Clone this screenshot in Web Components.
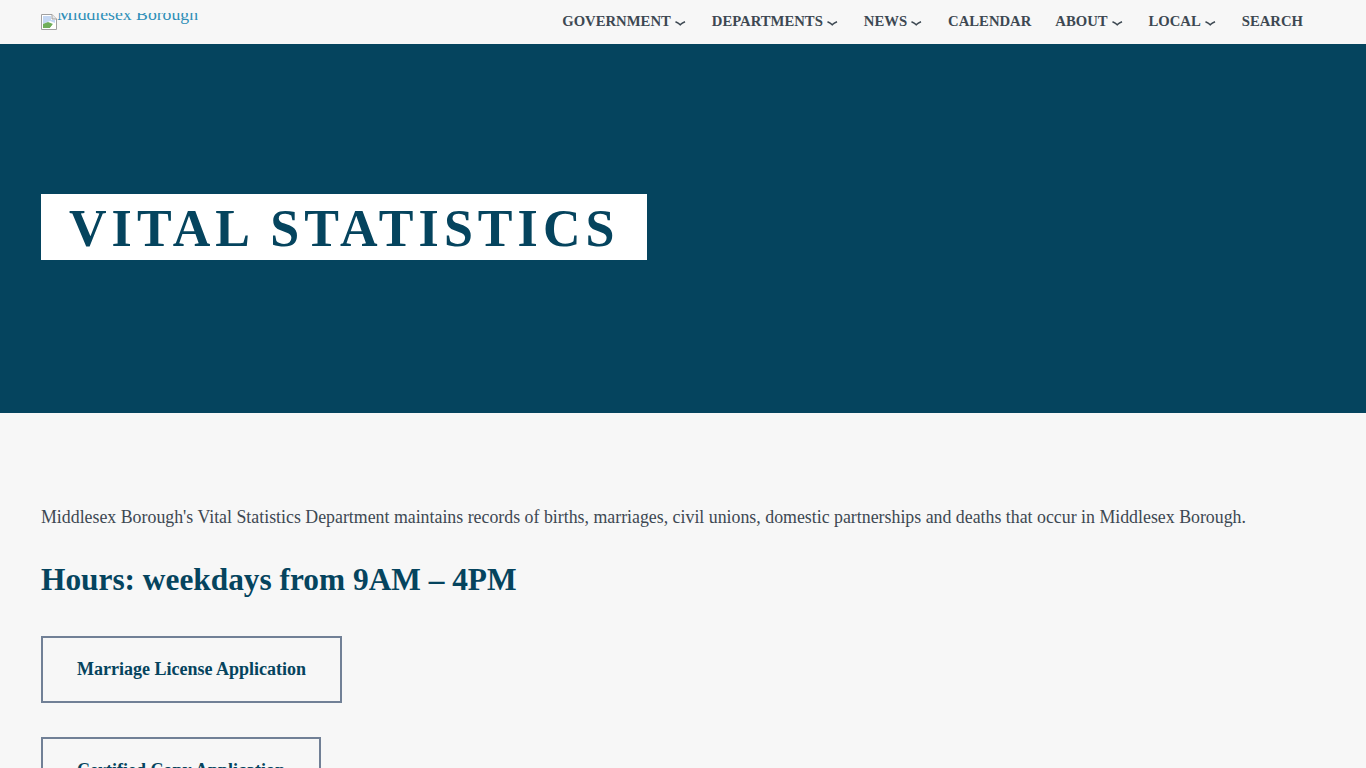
<!DOCTYPE html>
<html lang="en">
<head>
<meta charset="utf-8">
<title>Vital Statistics</title>
<style>
  html, body { margin: 0; padding: 0; background: #f7f7f7; }
  body { font-family: "Liberation Serif", "Times New Roman", serif; }
</style>
</head>
<body>
<site-header></site-header>
<page-hero>Vital Statistics</page-hero>
<page-content>
  <p>Middlesex Borough's Vital Statistics Department maintains records of births, marriages, civil unions, domestic partnerships and deaths that occur in Middlesex Borough.</p>
  <h2>Hours: weekdays from 9AM – 4PM</h2>
  <outline-button>Marriage License Application</outline-button>
  <outline-button>Certified Copy Application</outline-button>
</page-content>

<script>
class NavItem extends HTMLElement {
  constructor () {
    super()
    this.shadow = this.attachShadow({ mode: 'open' })
  }

  connectedCallback () {
    const arrow = this.hasAttribute('dropdown')
      ? `<svg width="11" height="5" viewBox="0 0 11 5"><path d="M.5 .7Q3.5 2 5.2 3.8 7 2 10 .7" fill="none" stroke="#3d4852" stroke-width="1.5"/></svg>`
      : ''
    this.shadow.innerHTML = `
      <style>
        :host { display: block; }
        a {
          display: flex;
          align-items: center;
          color: #3d4852;
          font-size: 14.7px;
          font-weight: 700;
          text-transform: uppercase;
          text-decoration: none;
          white-space: nowrap;
        }
        svg { margin: 4px 2px 0 4px; }
      </style>
      <a href="#"><slot></slot>${arrow}</a>
    `
  }
}

class SiteHeader extends HTMLElement {
  constructor () {
    super()
    this.shadow = this.attachShadow({ mode: 'open' })
  }

  connectedCallback () {
    this.shadow.innerHTML = `
      <style>
        :host { display: block; background: #f7f7f7; }
        .bar {
          display: flex;
          justify-content: space-between;
          height: 44px;
          padding: 0 63px 0 41px;
        }
        .logo {
          display: flex;
          height: 30px;
          color: #2f8fb8;
          font-size: 17.7px;
          line-height: 20px;
          text-decoration: none;
          white-space: nowrap;
        }
        .logo svg { flex: none; margin-top: 14px; }
        /* alt text of the missing logo, its top is cut off */
        .logo span { display: block; height: 11px; margin-top: 13px; overflow: hidden; }
        .logo span b { display: block; margin-top: -9px; font-weight: 400; }
        nav { display: flex; align-items: center; padding-bottom: 2px; }
        nav-item { margin-left: 24px; }
      </style>
      <div class="bar">
        <a class="logo" href="#">
          <svg width="16" height="16" viewBox="0 0 16 16">
            <path d="M.5 .5H11L15.5 5V15.5H.5Z" fill="#fff" stroke="#a0a0a0"/>
            <path d="M11 .5V5H15.5" fill="#e8e8e8" stroke="#a0a0a0"/>
            <path d="M2 2H10V6H14V9L9 7 2 10Z" fill="#c4d7f2"/>
            <path d="M2 10L7 8 12 10 9 14H2Z" fill="#6fae5a"/>
            <path d="M9 14L13 9 14 10V14Z" fill="#fff"/>
          </svg>
          <span><b>Middlesex Borough</b></span>
        </a>
        <nav>
          <nav-item dropdown>Government</nav-item>
          <nav-item dropdown>Departments</nav-item>
          <nav-item dropdown>News</nav-item>
          <nav-item>Calendar</nav-item>
          <nav-item dropdown>About</nav-item>
          <nav-item dropdown>Local</nav-item>
          <nav-item>Search</nav-item>
        </nav>
      </div>
    `
  }
}

class PageHero extends HTMLElement {
  constructor () {
    super()
    this.shadow = this.attachShadow({ mode: 'open' })
  }

  connectedCallback () {
    this.shadow.innerHTML = `
      <style>
        :host {
          display: flex;
          align-items: center;
          height: 369px;
          padding: 0 41px 4px;
          box-sizing: border-box;
          background: #05445e;
        }
        h1 {
          margin: 0;
          padding: 4px 28px 0;
          background: #fff;
          color: #05445e;
          font-size: 52px;
          line-height: 62px;
          font-weight: 700;
          letter-spacing: 5.05px;
          text-transform: uppercase;
          white-space: nowrap;
        }
      </style>
      <h1><slot></slot></h1>
    `
  }
}

class PageContent extends HTMLElement {
  constructor () {
    super()
    this.shadow = this.attachShadow({ mode: 'open' })
  }

  connectedCallback () {
    this.shadow.innerHTML = `
      <style>
        :host { display: block; padding: 92px 41px 40px; }
        ::slotted(p) {
          margin: 0 0 33px;
          color: #3d4852;
          font-size: 17.84px;
          line-height: 24px;
        }
        ::slotted(h2) {
          margin: 0 0 38px;
          color: #05445e;
          font-size: 31.35px;
          line-height: 36px;
          font-weight: 700;
        }
      </style>
      <slot></slot>
    `
  }
}

class OutlineButton extends HTMLElement {
  constructor () {
    super()
    this.shadow = this.attachShadow({ mode: 'open' })
  }

  connectedCallback () {
    this.shadow.innerHTML = `
      <style>
        :host { display: block; margin-bottom: 34px; }
        a {
          display: inline-block;
          padding: 20px 34px;
          border: 2px solid #718096;
          color: #05445e;
          font-size: 18px;
          line-height: 23px;
          font-weight: 700;
          text-decoration: none;
        }
      </style>
      <a href="#"><slot></slot></a>
    `
  }
}

customElements.define('nav-item', NavItem)
customElements.define('site-header', SiteHeader)
customElements.define('page-hero', PageHero)
customElements.define('page-content', PageContent)
customElements.define('outline-button', OutlineButton)
</script>
</body>
</html>
